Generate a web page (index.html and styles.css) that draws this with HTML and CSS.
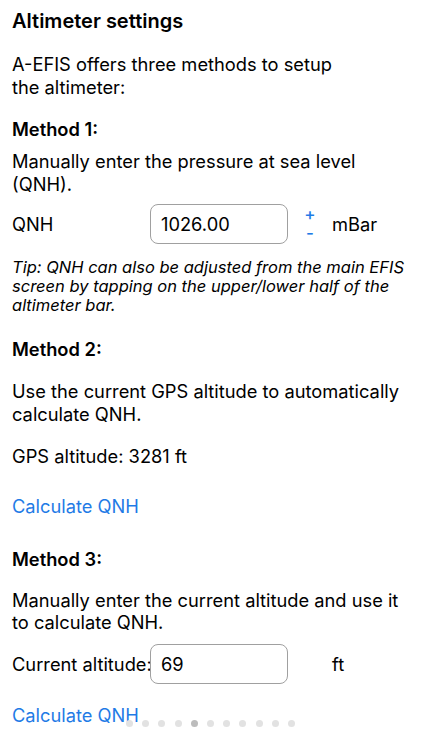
FILE: index.html
```html
<!DOCTYPE html>
<html>
<head>
<meta charset="utf-8">
<link rel="stylesheet" href="styles.css">
</head>
<body>
<div class="page">
  <h1 class="title">Altimeter settings</h1>
  <p class="text intro">A-EFIS offers three methods to setup<br>the altimeter:</p>

  <h2 class="method m1">Method 1:</h2>
  <p class="text after-method1">Manually enter the pressure at sea level (QNH).</p>
  <div class="row qnh-row">
    <span class="label">QNH</span>
    <div class="field">1026.00</div>
    <div class="stepper"><span class="plus">+</span><span class="minus">-</span></div>
    <span class="unit">mBar</span>
  </div>
  <p class="tip">Tip: QNH can also be adjusted from the main EFIS screen by tapping on the upper/lower half of the altimeter bar.</p>

  <h2 class="method m2">Method 2:</h2>
  <p class="text after-method a2">Use the current GPS altitude to automatically calculate QNH.</p>
  <p class="text gps">GPS altitude: 3281 ft</p>
  <p class="link link1">Calculate QNH</p>

  <h2 class="method m3">Method 3:</h2>
  <p class="text after-method">Manually enter the current altitude and use it to calculate QNH.</p>
  <div class="row alt-row">
    <span class="label">Current altitude:</span>
    <div class="field">69</div>
    <div class="stepper"></div>
    <span class="unit">ft</span>
  </div>
  <p class="link link2">Calculate QNH</p>

  <div class="dots">
    <span class="dot"></span><span class="dot"></span><span class="dot"></span><span class="dot"></span>
    <span class="dot active"></span><span class="dot"></span><span class="dot"></span><span class="dot"></span>
    <span class="dot"></span><span class="dot"></span><span class="dot"></span>
  </div>
</div>
</body>
</html>
```

FILE: styles.css
```css
* { box-sizing: border-box; }
html, body {
  margin: 0;
  padding: 0;
  background: #ffffff;
}
body {
  font-family: Inter, "Noto Sans", "Liberation Sans", sans-serif;
  color: #000;
  width: 422px;
  height: 750px;
  overflow: hidden;
}
.page {
  position: relative;
  padding: 9px 18px 0 12px;
  height: 750px;
}
.title {
  margin: 0;
  font-size: 20px;
  font-weight: 600;
  line-height: 24px;
}
.text {
  margin: 0;
  font-size: 18.3px;
  line-height: 22.5px;
  font-weight: 400;
}
.intro { margin-top: 20px; padding-right: 60px; }
.method {
  margin: 0;
  font-size: 18.3px;
  font-weight: 600;
  line-height: 24px;
}
.m1 { margin-top: 19px; }
.after-method1 { margin-top: 9px; }
.m2 { margin-top: 22px; }
.m3 { margin-top: 29px; }
.after-method { margin-top: 18px; }
.a2 { margin-top: 19px; }
.gps { margin-top: 20px; }
.row {
  display: grid;
  grid-template-columns: 138px 138px 44px auto;
  align-items: center;
  height: 40px;
  font-size: 18.3px;
}
.label { white-space: nowrap; }
.qnh-row { margin-top: 9px; }
.alt-row { margin-top: 10px; }
.field {
  height: 40px;
  border: 1px solid #a0a0a0;
  border-radius: 8px;
  padding: 0 10px;
  display: flex;
  align-items: center;
  font-size: 18.3px;
  background: #fff;
}
.stepper {
  display: flex;
  flex-direction: column;
  align-items: center;
  justify-content: center;
  color: #1f7be6;
  font-size: 17px;
  line-height: 19px;
  font-weight: 500;
}
.tip {
  margin: 14px 0 0 0;
  font-size: 16.5px;
  line-height: 19px;
  font-style: italic;
}
.link {
  margin: 0;
  font-size: 18.3px;
  line-height: 23px;
  color: #1f7be6;
}
.link1 { margin-top: 27px; }
.link2 { margin-top: 20px; }
.dots {
  position: absolute;
  left: 126px;
  top: 720px;
  display: flex;
  gap: 9.2px;
}
.dot {
  width: 7px;
  height: 7px;
  border-radius: 50%;
  background: #e2e2e2;
}
.dot.active { background: #bcbcbc; }
```
